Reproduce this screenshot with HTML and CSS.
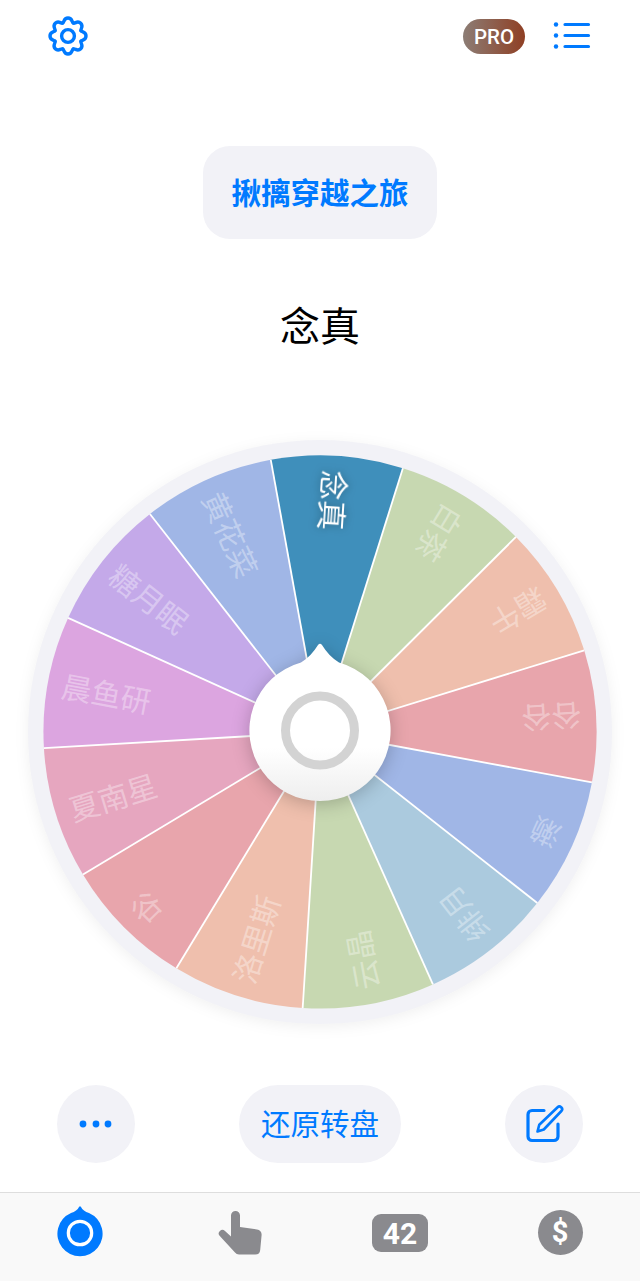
FILE: index.html
```html
<!DOCTYPE html>
<html lang="zh-CN">
<head>
<meta charset="utf-8">
<title>转盘</title>
<link rel="stylesheet" href="styles.css">
</head>
<body>
<div class="page">
	<div class="top">
		<svg class="gear" width="44" height="44" viewBox="-22 -22 44 44">
			<circle r="6.4"/>
			<path id="tooth" d="M-5.36 -12.93C-3.5 -14 -4.5 -18 0 -18C4.5 -18 3.5 -14 5.36 -12.93"/>
			<use href="#tooth" transform="rotate(45)"/>
			<use href="#tooth" transform="rotate(90)"/>
			<use href="#tooth" transform="rotate(135)"/>
			<use href="#tooth" transform="rotate(180)"/>
			<use href="#tooth" transform="rotate(225)"/>
			<use href="#tooth" transform="rotate(270)"/>
			<use href="#tooth" transform="rotate(315)"/>
		</svg>
		<div class="top-right">
			<div class="pro">PRO</div>
			<svg class="list" width="38" height="32" viewBox="0 0 38 32">
				<circle cx="3" cy="4.5" r="2.2"/>
				<circle cx="3" cy="15.5" r="2.2"/>
				<circle cx="3" cy="26.5" r="2.2"/>
				<path d="M12 4.5H35.500M12 15.5H35.500M12 26.500H35.500"/>
			</svg>
		</div>
	</div>

	<button class="title-btn">揪摛穿越之旅</button>
	<div class="winner">念真</div>

	<svg class="wheel" width="620" height="620" viewBox="-310 -310 620 620">
		<defs>
			<linearGradient id="hubfill" x1="0" y1="0" x2="0" y2="1">
				<stop offset="0.66" stop-color="#ffffff"/>
				<stop offset="1" stop-color="#eeeeee"/>
			</linearGradient>
			<path id="wedge" d="M0 0L-66.2 -268.5A276.5 276.5 0 0 1 66.2 -268.5Z"/>
			<path id="sep" d="M0 0L-66.2 -268.5"/>
		</defs>
		<circle class="rim" r="292"/>
		<g transform="rotate(3.6)"><use href="#wedge" class="c0"/></g>
		<g transform="rotate(31.29)"><use href="#wedge" class="c1"/></g>
		<g transform="rotate(58.98)"><use href="#wedge" class="c2"/></g>
		<g transform="rotate(86.68)"><use href="#wedge" class="c3"/></g>
		<g transform="rotate(114.37)"><use href="#wedge" class="c4"/></g>
		<g transform="rotate(142.06)"><use href="#wedge" class="c5"/></g>
		<g transform="rotate(169.75)"><use href="#wedge" class="c6"/></g>
		<g transform="rotate(197.44)"><use href="#wedge" class="c7"/></g>
		<g transform="rotate(225.14)"><use href="#wedge" class="c3"/></g>
		<g transform="rotate(252.83)"><use href="#wedge" class="c9"/></g>
		<g transform="rotate(280.52)"><use href="#wedge" class="c10"/></g>
		<g transform="rotate(308.21)"><use href="#wedge" class="c11"/></g>
		<g transform="rotate(335.9)"><use href="#wedge" class="c12"/></g>

		<g class="seps">
			<use href="#sep" transform="rotate(3.6)"/>
			<use href="#sep" transform="rotate(31.29)"/>
			<use href="#sep" transform="rotate(58.98)"/>
			<use href="#sep" transform="rotate(86.68)"/>
			<use href="#sep" transform="rotate(114.37)"/>
			<use href="#sep" transform="rotate(142.06)"/>
			<use href="#sep" transform="rotate(169.75)"/>
			<use href="#sep" transform="rotate(197.44)"/>
			<use href="#sep" transform="rotate(225.14)"/>
			<use href="#sep" transform="rotate(252.83)"/>
			<use href="#sep" transform="rotate(280.52)"/>
			<use href="#sep" transform="rotate(308.21)"/>
			<use href="#sep" transform="rotate(335.9)"/>
		</g>

		<g class="labels">
			<g transform="rotate(3.6)"><text class="picked" transform="translate(0 -262) rotate(90)">念真</text></g>
			<g transform="rotate(31.29)"><text transform="translate(0 -262) rotate(90)">白茶</text></g>
			<g transform="rotate(58.98)"><text transform="translate(0 -262) rotate(90)">霜午</text></g>
			<g transform="rotate(86.68)"><text transform="translate(0 -262) rotate(90)">谷谷</text></g>
			<g transform="rotate(114.37)"><text transform="translate(0 -262) rotate(90)">濑</text></g>
			<g transform="rotate(142.06)"><text transform="translate(0 -262) rotate(90)">绯月</text></g>
			<g transform="rotate(169.75)"><text transform="translate(0 -262) rotate(90)">云晶</text></g>
			<g transform="rotate(197.44)"><text transform="translate(0 -262) rotate(90)">洛里斯</text></g>
			<g transform="rotate(225.14)"><text transform="translate(0 -262) rotate(90)">谷</text></g>
			<g transform="rotate(252.83)"><text transform="translate(0 -262) rotate(90)">夏南星</text></g>
			<g transform="rotate(280.52)"><text transform="translate(0 -262) rotate(90)">晨鱼研</text></g>
			<g transform="rotate(308.21)"><text transform="translate(0 -262) rotate(90)">糖月眠</text></g>
			<g transform="rotate(335.9)"><text transform="translate(0 -262) rotate(90)">黄花菜</text></g>
		</g>

		<g class="hub" transform="translate(0 -1.500)">
			<path fill="url(#hubfill)" d="M-19 -68Q-9 -74 -2 -85.5Q0 -88 2 -85.5Q9 -74 19 -68A70.6 70.6 0 1 1 -19 -68Z"/>
			<circle class="hub-ring" r="34.5"/>
		</g>
	</svg>

	<div class="actions">
		<button class="round">
			<svg width="40" height="12" viewBox="0 0 40 12"><circle cx="7" cy="6" r="3.4"/><circle cx="20" cy="6" r="3.4"/><circle cx="32" cy="6" r="3.4"/></svg>
		</button>
		<button class="reset">还原转盘</button>
		<button class="round">
			<svg class="edit" width="44" height="44" viewBox="0 0 44 44">
				<path d="M22 8.5H10a4 4 0 0 0-4 4V34.500a4 4 0 0 0 4 4H32a4 4 0 0 0 4-4V22"/>
				<path class="pencil" d="M15.500 29.500l1.800-6.800L35.600 5.200a2.500 2.500 0 0 1 3.500 0l.3.3a2.500 2.500 0 0 1 0 3.500L21.800 27.500Z"/>
			</svg>
		</button>
	</div>

	<div class="tabs">
		<div class="tab">
			<svg width="50" height="52" viewBox="-25 -28 50 52">
				<path class="tab-on" d="M-9 -20Q-3 -22 -1 -26Q0 -27.500 1 -26Q3 -22 9 -20A22.600 22.600 0 1 1 -9 -20Z"/>
				<circle class="tab-ring" r="11.700"/>
			</svg>
		</div>
		<div class="tab">
			<svg width="48" height="52" viewBox="0 0 48 52">
				<path class="tab-off" d="M15 10.500a4.500 4.500 0 0 1 9 0V22L41 24.500a5 5 0 0 1 4.600 5.400L44.200 45a5 5 0 0 1-5 4.600H23a5 5 0 0 1-4-2L3.800 31a3.600 3.600 0 0 1 5.200-5L15 31.500Z"/>
			</svg>
		</div>
		<div class="tab"><div class="count">42</div></div>
		<div class="tab"><div class="dollar">$</div></div>
	</div>
</div>
</body>
</html>
```

FILE: styles.css
```css
body {
	margin: 0;
	background: #fff;
	font-family: "Noto Sans CJK SC", "Liberation Sans", sans-serif;
}
button {
	border: 0;
	padding: 0;
	font-family: inherit;
	cursor: pointer;
}
.page {
	width: 640px;
	height: 1281px;
	display: flex;
	flex-direction: column;
	align-items: center;
	overflow: hidden;
}

/* top bar */
.top {
	width: 100%;
	height: 72px;
	box-sizing: border-box;
	padding: 0 49px 0 46px;
	display: flex;
	justify-content: space-between;
	align-items: center;
}
.gear {
	fill: none;
	stroke: #007aff;
	stroke-width: 3.4;
	stroke-linecap: round;
}
.top-right {
	display: flex;
	align-items: center;
	gap: 28px;
}
.pro {
	width: 62px;
	height: 35px;
	border-radius: 18px;
	background: linear-gradient(90deg, #8c7d75, #8f3f24);
	color: #fff;
	font-family: Roboto, sans-serif;
	font-size: 20.500px;
	font-weight: 500;
	line-height: 36px;
	text-align: center;
}
.list {
	fill: #007aff;
	stroke: #007aff;
	stroke-width: 0;
}
.list path {
	fill: none;
	stroke-width: 3.200;
	stroke-linecap: round;
}

/* title + result */
.title-btn {
	width: 234px;
	height: 93px;
	margin-top: 74px;
	padding-bottom: 4px;
	border-radius: 27px;
	background: #f2f2f7;
	color: #007aff;
	font-size: 29.500px;
	font-weight: 700;
}
.winner {
	margin-top: 55px;
	height: 60px;
	line-height: 60px;
	font-size: 40px;
	color: #000;
}

/* wheel */
.wheel {
	display: block;
	margin-top: 68px;
	flex: none;
}
.rim {
	fill: #f2f2f7;
	filter: drop-shadow(0 3px 7px rgba(0, 0, 0, 0.06));
}
.c0 { fill: #3f8fbb; }
.c1, .c6 { fill: #c7d8b1; }
.c2, .c7 { fill: #efbfad; }
.c3 { fill: #e8a5ac; }
.c4, .c12 { fill: #a0b6e6; }
.c5 { fill: #abcade; }
.c9 { fill: #e6a6bf; }
.c10 { fill: #dca5e0; }
.c11 { fill: #c4a9e9; }
.seps {
	stroke: #fff;
	stroke-width: 1.800;
	fill: none;
}
.labels text {
	font-size: 30px;
	fill: rgba(255, 255, 255, 0.36);
	dominant-baseline: central;
}
.labels .picked {
	fill: #fff;
	filter: drop-shadow(0 0 5px rgba(0, 0, 0, 0.35));
}
.hub {
	filter: drop-shadow(0 3px 9px rgba(0, 0, 0, 0.22));
}
.hub-ring {
	fill: none;
	stroke: #d3d3d3;
	stroke-width: 9;
}

/* buttons under the wheel */
.actions {
	width: 100%;
	box-sizing: border-box;
	margin-top: 43px;
	padding: 0 57px;
	display: flex;
	justify-content: space-between;
}
.round {
	width: 78px;
	height: 78px;
	border-radius: 50%;
	background: #f2f2f7;
	display: flex;
	align-items: center;
	justify-content: center;
	fill: #007aff;
}
.reset {
	width: 162px;
	height: 78px;
	padding-bottom: 4px;
	border-radius: 39px;
	background: #f2f2f7;
	color: #007aff;
	font-size: 29.500px;
}
.edit {
	fill: none;
	stroke: #007aff;
	stroke-width: 3.200;
	stroke-linecap: round;
	stroke-linejoin: round;
}
.edit .pencil {
	stroke-width: 2.600;
}

/* tab bar */
.tabs {
	width: 100%;
	height: 89px;
	box-sizing: border-box;
	margin-top: 29px;
	padding-top: 12px;
	border-top: 1px solid #dedede;
	background: #f9f9f9;
	display: grid;
	grid-template-columns: repeat(4, 1fr);
}
.tab {
	display: flex;
	justify-content: center;
	height: 52px;
	align-items: center;
}
.tab-on { fill: #007aff; }
.tab-ring {
	fill: #007aff;
	stroke: #fff;
	stroke-width: 3.200;
}
.tab-off { fill: #8a8a8e; }
.count {
	width: 56px;
	height: 38px;
	border-radius: 9px;
	background: #8a8a8e;
	color: #fff;
	font-family: Roboto, sans-serif;
	font-size: 30px;
	font-weight: 700;
	line-height: 39px;
	text-align: center;
	margin-top: 3px;
}
.dollar {
	width: 45px;
	height: 45px;
	border-radius: 50%;
	background: #8a8a8e;
	color: #fff;
	font-family: Roboto, sans-serif;
	font-size: 29px;
	font-weight: 700;
	line-height: 45px;
	text-align: center;
	margin-top: 3px;
}
```
